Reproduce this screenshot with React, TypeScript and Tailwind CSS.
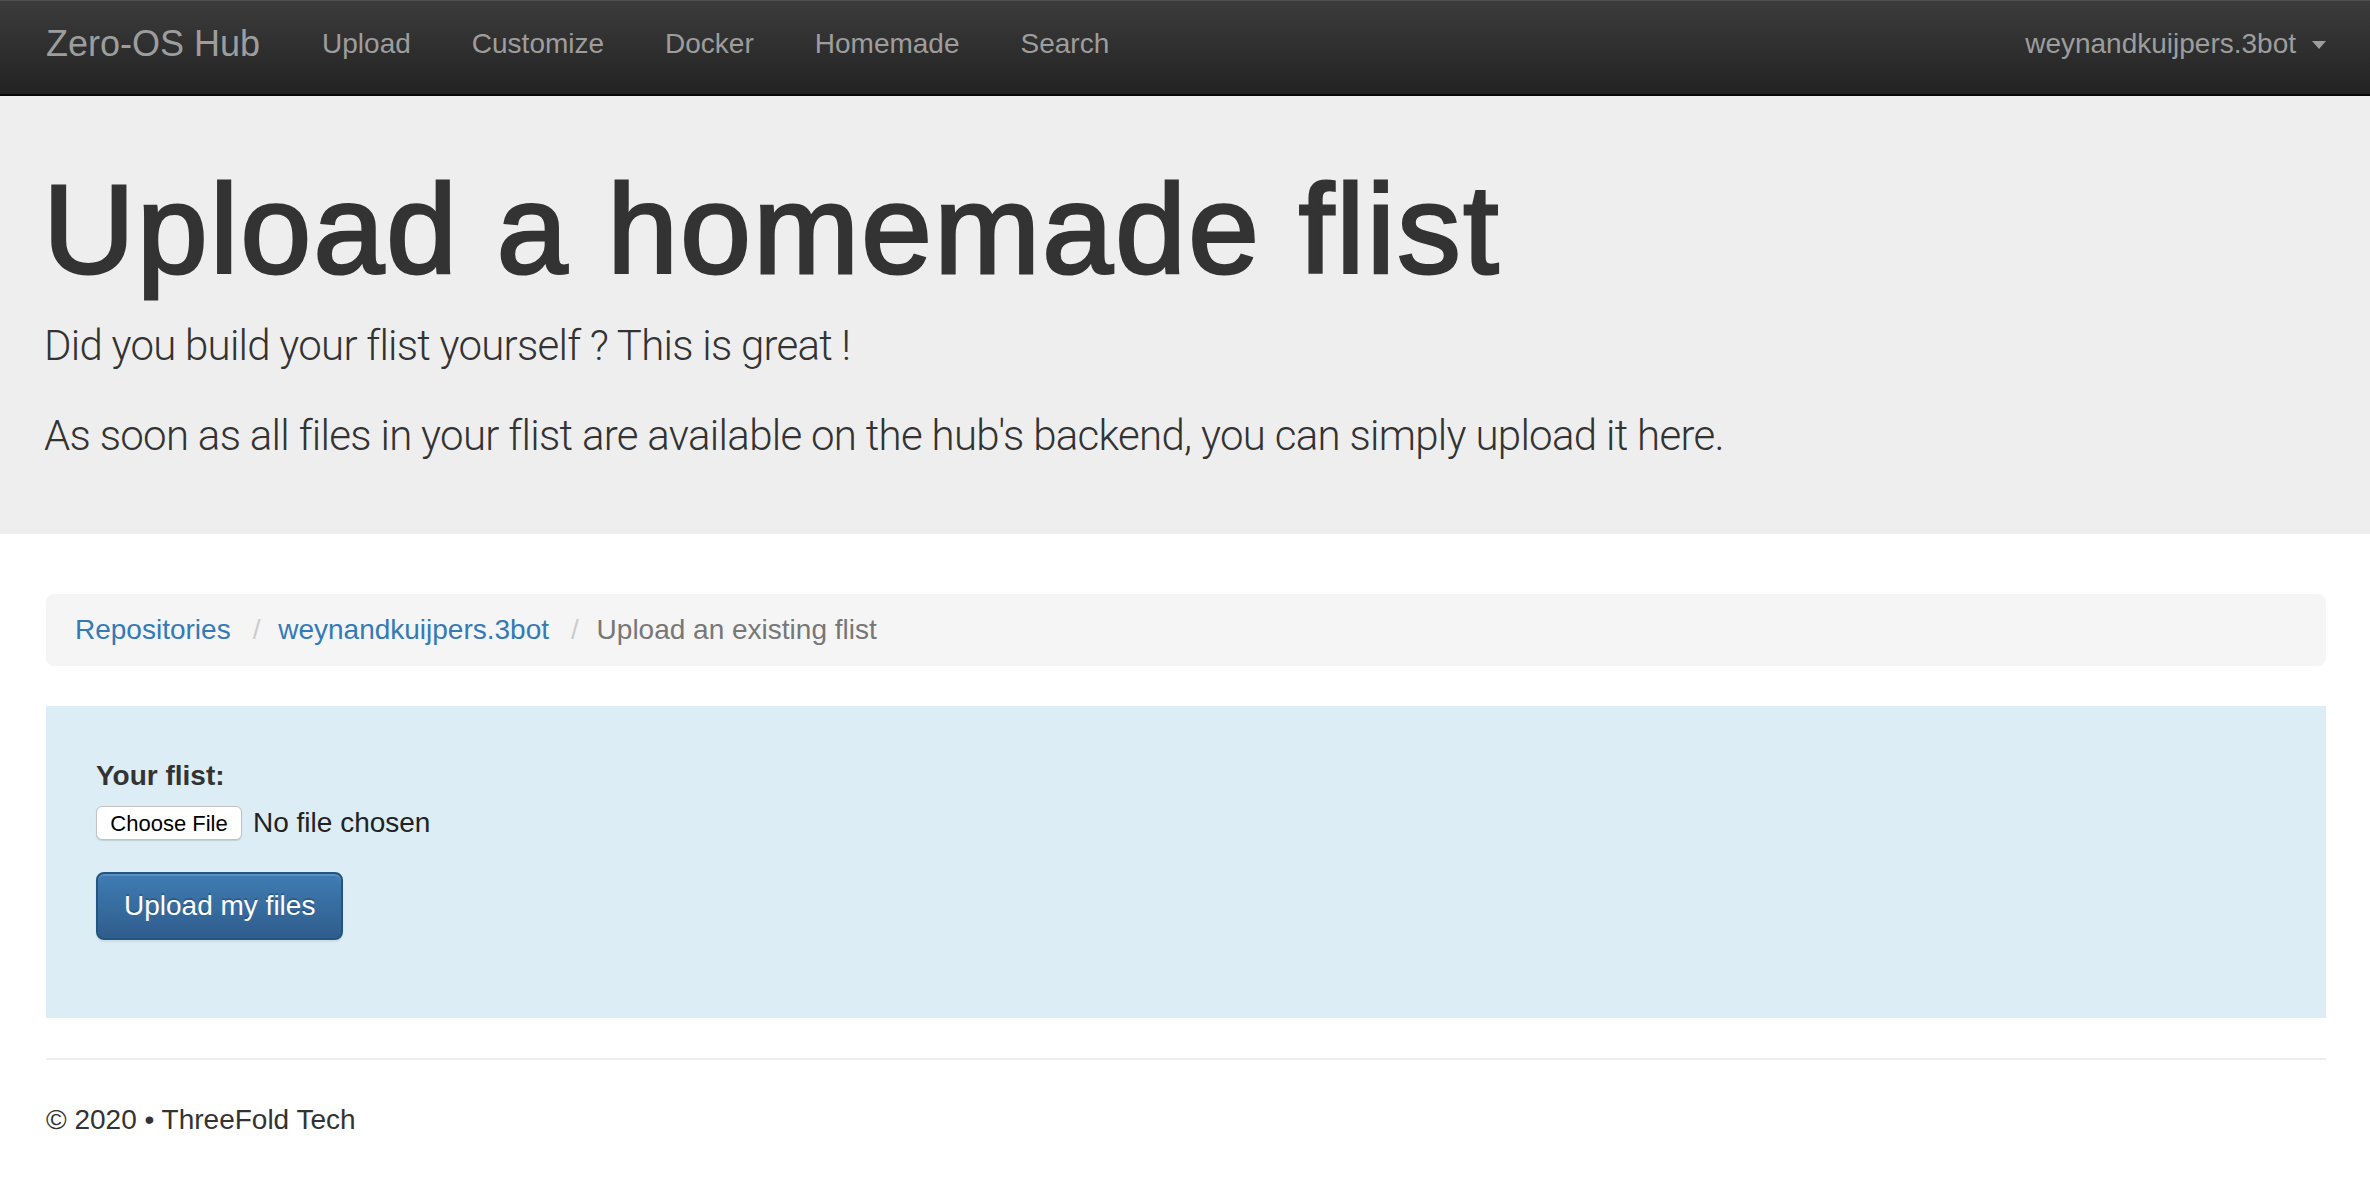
const navLinks = ['Upload', 'Customize', 'Docker', 'Homemade', 'Search'];

function Navbar() {
  return (
    <div className="h-[96px] border-b-2 border-[#080808] bg-[linear-gradient(to_bottom,#3c3c3c,#222222)] shadow-[inset_0_1px_0_rgba(255,255,255,0.1)]">
      <div className="flex items-start pl-[46px] pr-[44px] pt-[24px]">
        <a className="text-[36px] leading-[40px] text-[#9d9d9d] mr-[61px]">Zero-OS Hub</a>
        <div className="flex gap-[61px] ml-[1px]">
          {navLinks.map(l => (
            <a key={l} className="text-[28px] leading-[40px] text-[#9d9d9d]">
              {l}
            </a>
          ))}
        </div>
        <div className="ml-auto flex items-center text-[28px] leading-[40px] text-[#9d9d9d]">
          <span>weynandkuijpers.3bot</span>
          <span className="ml-[16px] mt-[2px] w-0 h-0 border-x-[7px] border-x-transparent border-t-[8px] border-t-[#9d9d9d]" />
        </div>
      </div>
    </div>
  );
}

export default function App() {
  return (
    <div className="min-h-[1198px] bg-white text-[#333333] font-['Liberation_Sans',Arial,sans-serif]">
      <Navbar />

      {/* Jumbotron */}
      <div className="bg-[#eeeeee] pl-[44px] pr-[44px] pt-[63px] pb-[68px]">
        <h1 className="text-[127px] leading-[140px] font-normal tracking-[2.3px] ml-[-1px] mb-[17px] [-webkit-text-stroke:3px_#333333]">
          Upload a homemade flist
        </h1>
        <p className="font-['Roboto',sans-serif] font-light text-[42px] leading-[60px] tracking-[-0.75px] mb-[30px]">
          Did you build your flist yourself ? This is great !
        </p>
        <p className="font-['Roboto',sans-serif] font-light text-[42px] leading-[60px] tracking-[-0.7px]">
          As soon as all files in your flist are available on the hub's backend, you can simply upload it here.
        </p>
      </div>

      <div className="pl-[46px] pr-[44px]">
        {/* Breadcrumb */}
        <div className="mt-[60px] mb-[40px] flex items-center h-[72px] rounded-[8px] bg-[#f5f5f5] px-[29px] text-[28px] leading-[40px]">
          <a className="text-[#337ab7]">Repositories</a>
          <span className="ml-[12px] px-[10px] text-[#cccccc]">/{'\u00a0'}</span>
          <a className="text-[#337ab7]">weynandkuijpers.3bot</a>
          <span className="ml-[12px] px-[10px] text-[#cccccc]">/{'\u00a0'}</span>
          <span className="text-[#777777]">Upload an existing flist</span>
        </div>

        {/* Upload form */}
        <div className="bg-[#dcedf5] pl-[50px] pr-[50px] pt-[50px] pb-[78px]">
          <label className="block text-[28px] leading-[40px] font-bold mb-[10px]">Your flist:</label>
          <div className="flex items-center h-[34px]">
            <span className="flex items-center justify-center h-[34px] w-[146px] bg-white border border-[#c2c2c2] rounded-[6px] text-[22px] text-black shadow-[0_1px_1px_rgba(0,0,0,0.12)]">
              Choose File
            </span>
            <span className="ml-[11px] text-[28px] leading-[40px] text-[#222222]">No file chosen</span>
          </div>
          <button className="mt-[32px] block rounded-[8px] border-2 border-[#245580] bg-[linear-gradient(to_bottom,#3f7cb3,#2f5d8c)] px-[26px] py-[12px] text-[28px] leading-[40px] text-white shadow-[inset_0_2px_0_rgba(255,255,255,0.15),0_2px_2px_rgba(0,0,0,0.08)] [text-shadow:0_-2px_0_rgba(0,0,0,0.2)]">
            Upload my files
          </button>
        </div>

        <div className="mt-[40px] h-[2px] bg-[#eeeeee]" />

        {/* Footer */}
        <div className="pt-[40px] text-[28px] leading-[40px]">© 2020 • ThreeFold Tech</div>
      </div>
    </div>
  );
}
